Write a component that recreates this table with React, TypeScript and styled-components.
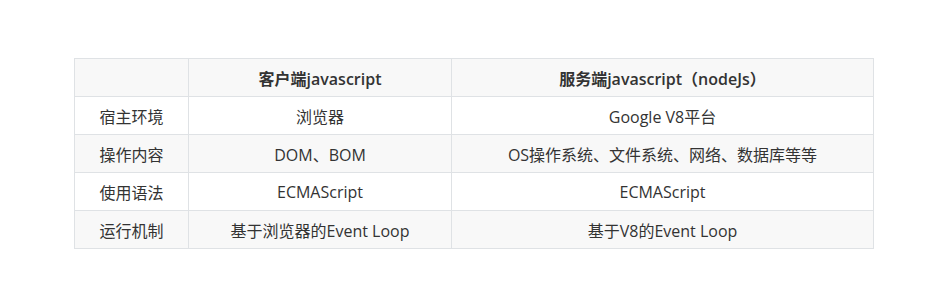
import styled, { createGlobalStyle } from 'styled-components';

const GlobalStyle = createGlobalStyle`
  body {
    margin: 0;
    background: #fff;
  }
`;

const Page = styled.div`
  width: 951px;
  height: 307px;
  padding: 58px 0 0 74px;
  box-sizing: border-box;
  font-family: 'Open Sans', 'Noto Sans CJK SC', sans-serif;
  color: #333;
`;

const Table = styled.table`
  border-collapse: collapse;
  table-layout: fixed;
  width: 799px;
  font-size: 16px;
`;

const Row = styled.tr<{ $shaded?: boolean }>`
  background: ${(p) => (p.$shaded ? '#f8f8f8' : '#fff')};
`;

const Head = styled.th`
  height: 37px;
  padding: 0 13px;
  border: 1px solid #dfe2e5;
  font-weight: 600;
  text-align: center;
`;

const Cell = styled.td`
  height: 37px;
  padding: 0 13px;
  border: 1px solid #dfe2e5;
  text-align: center;
`;

const rows = [
  ['宿主环境', '浏览器', 'Google V8平台'],
  ['操作内容', 'DOM、BOM', 'OS操作系统、文件系统、网络、数据库等等'],
  ['使用语法', 'ECMAScript', 'ECMAScript'],
  ['运行机制', '基于浏览器的Event Loop', '基于V8的Event Loop'],
];

const App = () => {
  return (
    <Page>
      <GlobalStyle />
      <Table>
        <colgroup>
          <col style={{ width: 114 }} />
          <col style={{ width: 263 }} />
          <col style={{ width: 422 }} />
        </colgroup>
        <thead>
          <Row $shaded>
            <Head></Head>
            <Head>客户端javascript</Head>
            <Head>服务端javascript（nodeJs）</Head>
          </Row>
        </thead>
        <tbody>
          {rows.map((r, i) => (
            <Row key={r[0]} $shaded={i % 2 === 1}>
              {r.map((c) => (
                <Cell key={c}>{c}</Cell>
              ))}
            </Row>
          ))}
        </tbody>
      </Table>
    </Page>
  );
};

export default App;
